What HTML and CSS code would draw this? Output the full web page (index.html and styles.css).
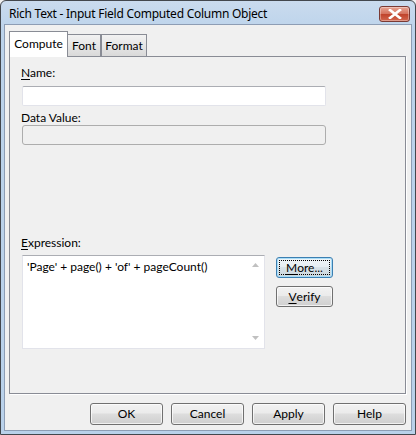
FILE: index.html
```html
<!DOCTYPE html>
<html>
<head>
<meta charset="utf-8">
<link rel="stylesheet" href="styles.css">
</head>
<body>
<div class="window">
  <div class="titlebar">
    <span class="title">Rich Text - Input Field Computed Column Object</span>
    <span class="close">
      <svg width="14" height="10" viewBox="0 0 14 10"><path d="M2 1 L12 9 M12 1 L2 9" stroke="#fff" stroke-width="2.6" stroke-linecap="square"/></svg>
    </span>
  </div>
  <div class="client">
    <div class="tabs">
      <div class="tab active">Compute</div>
      <div class="tab tab-font">Font</div>
      <div class="tab tab-format">Format</div>
    </div>
    <div class="panel">
      <label class="lbl lbl-name"><u>N</u>ame:</label>
      <div class="field"></div>
      <label class="lbl lbl-data">Data Value:</label>
      <div class="field disabled"></div>
      <label class="lbl lbl-expr"><u>E</u>xpression:</label>
      <div class="expr-row">
        <div class="expr">
          <div class="expr-text">'Page' + page() + 'of' + pageCount()</div>
          <div class="vscroll">
            <svg width="7" height="4" viewBox="0 0 7 4"><path d="M0 4 L3.5 0 L7 4 Z" fill="#c0c0c0"/></svg>
            <svg width="7" height="4" viewBox="0 0 7 4"><path d="M0 0 L3.5 4 L7 0 Z" fill="#c0c0c0"/></svg>
          </div>
        </div>
        <div class="side-btns">
          <button class="btn focused"><span class="focus-ring"><u>M</u>ore...</span></button>
          <button class="btn"><u>V</u>erify</button>
        </div>
      </div>
    </div>
    <div class="footer">
      <button class="btn wide">OK</button>
      <button class="btn wide">Cancel</button>
      <button class="btn wide">Apply</button>
      <button class="btn wide">Help</button>
    </div>
  </div>
</div>
</body>
</html>
```
FILE: styles.css
```css
* { box-sizing: border-box; }
html, body { margin: 0; padding: 0; background: #f0f0f0; }
body { font-family: Lato, "Noto Sans", sans-serif; font-size: 12px; color: #000; }

.window {
  width: 416px;
  height: 435px;
  border: 1px solid #43474d;
  border-radius: 6px 6px 0 0;
  background: linear-gradient(#cadbee, #bcd3eb 30px, #b9d1ea);
  display: flex;
  flex-direction: column;
  padding: 0 3px 3px 3px;
}

.titlebar {
  height: 23px;
  flex: none;
  display: flex;
  align-items: center;
  justify-content: space-between;
  padding-left: 5px;
}
.title {
  font-family: "Noto Sans", sans-serif;
  font-size: 12px;
  letter-spacing: -0.25px;
  color: #000;
  padding-top: 1px;
}
.close {
  width: 31px;
  height: 16px;
  margin-top: 3px;
  margin-right: 2px;
  border: 1px solid #7a3a34;
  border-radius: 3px;
  background: linear-gradient(#e8a493, #d5735e 48%, #c0432b 52%, #d2674f);
  display: flex;
  align-items: center;
  justify-content: center;
  box-shadow: inset 0 0 0 1px rgba(255,255,255,0.35);
}

.client {
  flex: 1;
  background: #f0f0f0;
  border: 1px solid #8d9db4;
  display: flex;
  flex-direction: column;
  padding: 6px 5px 0 4px;
}

/* tab strip */
.tabs { display: flex; align-items: flex-end; height: 25px; }
.tab {
  height: 22px;
  line-height: 15px;
  padding-top: 3px;
  text-align: center;
  border: 1px solid #898c95;
  border-bottom: none;
  background: linear-gradient(#f2f2f2, #e6e6e6 50%, #d9d9d9);
}
.tab.active {
  position: relative;
  z-index: 2;
  width: 59px;
  height: 26px;
  margin-bottom: -1px;
  padding-top: 4px;
  background: #fff;
}
.tab-font { width: 34px; margin-left: -1px; }
.tab-format { width: 46px; }

.panel {
  height: 338px;
  width: 397px;
  border: 1px solid #898c95;
  background: #f0f0f0;
  box-shadow: 1px 1px 0 #fff;
  display: flex;
  flex-direction: column;
  padding: 8px 0 0 11px;
}

.lbl { display: block; height: 15px; line-height: 15px; }
.lbl u { text-decoration-thickness: 1px; text-underline-offset: 2px; }
.lbl-name { margin-bottom: 6px; }
.lbl-data { margin-top: 4px; }
.lbl-expr { margin-top: 90px; margin-bottom: 5px; }

.field {
  width: 304px;
  height: 20px;
  margin-left: 1px;
  background: #fff;
  border: 1px solid #e2e3ea;
  border-top-color: #abadb3;
  border-radius: 2px;
}
.field.disabled {
  background: #f0f0f0;
  border: 1px solid #adadad;
  border-radius: 3px;
}

.expr-row { display: flex; align-items: flex-start; margin-left: 1px; }
.expr {
  width: 243px;
  height: 94px;
  background: #fff;
  border: 1px solid #e2e3ea;
  border-top-color: #abadb3;
  display: flex;
}
.expr-text { flex: 1; padding: 3px 0 0 4px; white-space: nowrap; }
.vscroll {
  width: 17px;
  display: flex;
  flex-direction: column;
  justify-content: space-between;
  align-items: center;
  padding: 7px 0 8px 0;
}

.side-btns { display: flex; flex-direction: column; gap: 8px; margin-left: 11px; padding-top: 2px; }

.btn {
  font: inherit;
  color: #000;
  width: 57px;
  height: 21px;
  padding: 0;
  border: 1px solid #707070;
  border-radius: 3px;
  background: linear-gradient(#f2f2f2, #ebebeb 45%, #dddddd 50%, #cfcfcf);
  box-shadow: inset 0 0 0 1px rgba(255,255,255,0.7);
  display: flex;
  align-items: center;
  justify-content: center;
  line-height: 1;
}
.btn u { text-decoration-thickness: 1px; text-underline-offset: 2px; }
.btn.focused {
  border-color: #3c7fb1;
  background: linear-gradient(#f0f5f8, #e6eef3 45%, #d8e2e8 50%, #cbd6dc);
  box-shadow: inset 0 0 0 1px #a9ddf8;
  padding: 2px;
}
.focus-ring {
  width: 100%;
  height: 100%;
  border: 1px dotted #000;
  display: flex;
  align-items: center;
  justify-content: center;
}

.footer {
  display: flex;
  justify-content: flex-end;
  gap: 8px;
  padding-top: 9px;
}
.btn.wide { width: 73px; height: 22px; }
```
